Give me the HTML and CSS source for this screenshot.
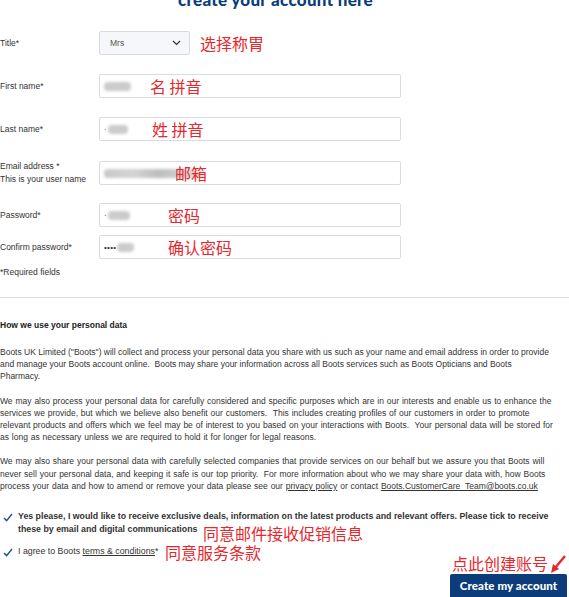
FILE: index.html
```html
<!DOCTYPE html>
<html lang="en">
<head>
<meta charset="utf-8">
<title>Create your account</title>
<link rel="stylesheet" href="styles.css">
</head>
<body>
<div class="page">
  <h1 class="heading">create your account here</h1>

  <form class="form">
    <div class="row">
      <label class="label">Title*</label>
      <div class="title-wrap">
        <div class="field select"><span>Mrs</span>
          <svg class="chev" width="9" height="6" viewBox="0 0 9 6"><path d="M1 1 L4.5 4.5 L8 1" fill="none" stroke="#333" stroke-width="1.2"/></svg>
        </div>
        <span class="note note-inline">选择称胃</span>
      </div>
    </div>

    <div class="row">
      <label class="label">First name*</label>
      <div class="field input">
        <span class="blur" style="width:27px"></span>
        <span class="note note-in" style="left:50px">名 拼音</span>
      </div>
    </div>

    <div class="row">
      <label class="label">Last name*</label>
      <div class="field input">
        <span class="dots">·</span><span class="blur" style="width:20px"></span>
        <span class="note note-in" style="left:52px">姓 拼音</span>
      </div>
    </div>

    <div class="row email">
      <label class="label">Email address *<br>This is your user name</label>
      <div class="field input">
        <span class="blur blur-long" style="width:98px"></span>
        <span class="note note-in" style="left:75px">邮箱</span>
      </div>
    </div>

    <div class="row tight">
      <label class="label">Password*</label>
      <div class="field input">
        <span class="dots">·</span><span class="blur" style="width:22px"></span>
        <span class="note note-in" style="left:68px">密码</span>
      </div>
    </div>

    <div class="row last">
      <label class="label">Confirm password*</label>
      <div class="field input">
        <span class="dots">••••</span><span class="blur" style="width:17px"></span>
        <span class="note note-in" style="left:68px">确认密码</span>
      </div>
    </div>

    <p class="required">*Required fields</p>
  </form>

  <hr class="divider">

  <section class="data">
    <h2 class="data-title">How we use your personal data</h2>
    <p>Boots UK Limited ("Boots") will collect and process your personal data you share with us such as your name and email address in order to provide<br>and manage your Boots account online.&nbsp; Boots may share your information across all Boots services such as Boots Opticians and Boots<br>Pharmacy.</p>
    <p class="wide">We may also process your personal data for carefully considered and specific purposes which are in our interests and enable us to enhance the<br>services we provide, but which we believe also benefit our customers.&nbsp; This includes creating profiles of our customers in order to promote<br>relevant products and offers which we feel may be of interest to you based on your interactions with Boots.&nbsp; Your personal data will be stored for<br>as long as necessary unless we are required to hold it for longer for legal reasons.</p>
    <p class="wide">We may also share your personal data with carefully selected companies that provide services on our behalf but we assure you that Boots will<br>never sell your personal data, and keeping it safe is our top priority.&nbsp; For more information about who we may share your data with, how Boots<br>process your data and how to amend or remove your data please see our <a href="#">privacy policy</a> or contact <a href="#">Boots.CustomerCare_Team@boots.co.uk</a></p>
  </section>

  <div class="check-row first">
    <svg class="tick" width="10" height="9" viewBox="0 0 10 9"><path d="M1 5 L3.6 7.6 L9 1" fill="none" stroke="#1f4f9a" stroke-width="1.4"/></svg>
    <p class="check-text bold">Yes please, I would like to receive exclusive deals, information on the latest products and relevant offers. Please tick to receive these by email and digital communications</p>
    <span class="note note-c1">同意邮件接收促销信息</span>
  </div>

  <div class="check-row second">
    <svg class="tick" width="10" height="9" viewBox="0 0 10 9"><path d="M1 5 L3.6 7.6 L9 1" fill="none" stroke="#1f4f9a" stroke-width="1.4"/></svg>
    <p class="check-text">I agree to Boots <a href="#">terms &amp; conditions</a>*</p>
    <span class="note note-c2">同意服务条款</span>
  </div>

  <div class="actions">
    <span class="note note-btn">点此创建账号</span>
    <svg class="arrow" width="18" height="20" viewBox="0 0 18 20"><path d="M16 1 L6 13" stroke="#e8262b" stroke-width="2.4" fill="none"/><path d="M2 18 L4 9 L10 14 Z" fill="#e8262b"/></svg>
    <button class="btn" type="button">Create my account</button>
  </div>
</div>
</body>
</html>
```
FILE: styles.css
```css
* { box-sizing: border-box; }

html, body {
  margin: 0;
  padding: 0;
  background: #fff;
}

body {
  font-family: "Liberation Sans", Arial, sans-serif;
  color: #333;
  width: 569px;
  height: 597px;
  overflow: hidden;
}

.page {
  width: 569px;
}

.heading {
  margin: -10px 0 0;
  padding-right: 18px;
  height: 20px;
  line-height: 20px;
  text-align: center;
  font-family: Lato, "Open Sans", sans-serif;
  font-weight: 900;
  font-size: 17px;
  color: #0b3c7c;
  letter-spacing: 0.3px;
}

.form {
  margin-top: 21px;
}

.row {
  display: grid;
  grid-template-columns: 99px 302px;
  align-items: center;
  margin-bottom: 19px;
}

.row.email { margin-bottom: 17px; }
.row.tight { margin-bottom: 8px; }
.row.last { margin-bottom: 0; }

.label {
  font-size: 8.5px;
  line-height: 13px;
  color: #333;
}

.field {
  position: relative;
  height: 24px;
  border: 1px solid #d9dcdf;
  border-radius: 2px;
  background: #fff;
}

.title-wrap {
  display: flex;
  align-items: center;
}

.select {
  width: 91px;
  background: #f5f7fb;
  display: flex;
  align-items: center;
  justify-content: space-between;
  padding: 0 8px 0 10px;
  font-size: 8.5px;
  color: #555;
}

.input {
  display: flex;
  align-items: center;
  padding-left: 4px;
}

.blur {
  display: inline-block;
  height: 9px;
  background: #cbcbcb;
  border-radius: 4px;
  filter: blur(1.5px);
}

.blur-long {
  background: linear-gradient(90deg, #c8c8c8 0%, #d4d4d4 30%, #bdbdbd 55%, #dedede 100%);
}

.dots {
  font-size: 8px;
  color: #333;
  letter-spacing: 0.3px;
  margin-right: 1px;
}

.note {
  font-family: "Noto Sans CJK SC", sans-serif;
  font-size: 16px;
  line-height: 20px;
  color: #e8262b;
  white-space: nowrap;
}

.note-inline {
  margin-left: 10px;
}

.note-in {
  position: absolute;
  top: 1px;
}

.required {
  margin: 7px 0 0;
  font-size: 8.5px;
  line-height: 13px;
}

.divider {
  margin: 18px 0 0;
  border: 0;
  border-top: 1px solid #dcdcdc;
  height: 0;
}

.data {
  margin-top: 21px;
}

.data-title {
  margin: 0;
  font-size: 8.5px;
  line-height: 12px;
  font-weight: bold;
  color: #222;
}

.data p {
  margin: 15px 0 0;
  font-size: 8.5px;
  line-height: 12.2px;
  color: #333;
  white-space: nowrap;
}

.data p.wide {
  word-spacing: 0.5px;
}

.data p + p {
  margin-top: 12px;
}

a {
  color: #333;
  text-decoration: underline;
}

.check-row {
  position: relative;
  display: flex;
  align-items: flex-start;
}

.check-row.first { margin-top: 18px; }
.check-row.second { margin-top: 9px; }

.tick {
  margin: 3px 0 0 3px;
  flex: none;
}

.check-text {
  margin: 0 0 0 5px;
  font-size: 8.8px;
  line-height: 13px;
  width: 540px;
}

.bold {
  font-weight: bold;
  color: #333;
}

.note-c1 {
  position: absolute;
  left: 203px;
  top: 13px;
}

.note-c2 {
  position: absolute;
  left: 165px;
  top: -3px;
}

.actions {
  position: relative;
  margin-top: 16px;
  display: flex;
  justify-content: flex-end;
  padding-right: 2px;
}

.note-btn {
  position: absolute;
  right: 21px;
  top: -21px;
}

.arrow {
  position: absolute;
  right: 2px;
  top: -19px;
}

.btn {
  width: 117px;
  height: 28px;
  padding: 0 0 6px;
  border: 0;
  border-radius: 2px 2px 0 0;
  background: #0c3c7a;
  color: #fff;
  font-family: Lato, "Open Sans", sans-serif;
  font-weight: 900;
  font-size: 11.5px;
  letter-spacing: 0.1px;
}
```
